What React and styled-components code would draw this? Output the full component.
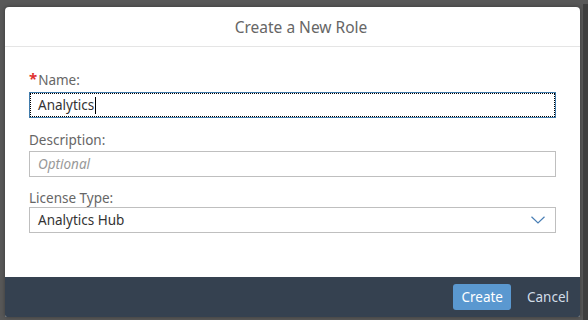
import React from "react";
import styled, { createGlobalStyle } from "styled-components";

const Global = createGlobalStyle`
  html, body { margin: 0; padding: 0; }
  body {
    width: 588px;
    height: 320px;
    overflow: hidden;
    background: #585858;
    font-family: "Noto Sans", "Liberation Sans", sans-serif;
  }
`;

const Screen = styled.div`
  display: flex;
  width: 588px;
  height: 320px;
`;

const Stage = styled.div`
  flex: 1;
  padding: 7px 0 0 5px;
`;

const SideStrip = styled.div`
  width: 5px;
  margin-top: 4px;
  background: #3e3e3e;
`;

const Dialog = styled.div`
  width: 575px;
  height: 310px;
  display: flex;
  flex-direction: column;
  background: #fff;
  border-radius: 4px 4px 2px 2px;
  overflow: hidden;
  box-shadow: 0 0 4px rgba(0, 0, 0, 0.35);
`;

const Header = styled.div`
  height: 39px;
  flex: none;
  display: flex;
  align-items: center;
  justify-content: center;
  padding-left: 17px;
  border-bottom: 1px solid #e5e5e5;
`;

const Title = styled.h1`
  margin: 0;
  font-size: 15.5px;
  font-weight: 400;
  color: #666;
`;

const Body = styled.div`
  flex: 1;
  padding: 24px 24px 0 24px;
  display: flex;
  flex-direction: column;
`;

const Field = styled.div`
  display: flex;
  flex-direction: column;
  margin-top: ${(p) => p.$top || 0}px;
`;

const Label = styled.label`
  font-size: 13.5px;
  line-height: 18px;
  color: #666;
  margin-bottom: ${(p) => p.$gap || 0}px;
  display: flex;
  align-items: flex-start;
`;

const Required = styled.span`
  color: #e03030;
  font-weight: 700;
  font-size: 15px;
  line-height: 14px;
  margin-right: 1px;
`;

const Box = styled.div`
  box-sizing: border-box;
  height: 26px;
  border: 1px solid ${(p) => (p.$focused ? "#427cac" : "#bfbfbf")};
  outline: ${(p) => (p.$focused ? "1px dotted #000" : "none")};
  outline-offset: -2px;
  display: flex;
  align-items: center;
  padding: 0 8px;
  font-size: 13.5px;
  color: #333;
  background: #fff;
`;

const Placeholder = styled.span`
  font-style: italic;
  color: #999;
  font-size: 13.5px;
`;

const Caret = styled.span`
  display: inline-block;
  width: 1px;
  height: 17px;
  background: #000;
  margin-left: 1px;
`;

const Value = styled.span`
  flex: 1;
  display: flex;
  align-items: center;
`;

const Chevron = styled.svg`
  width: 14px;
  height: 8px;
  margin-right: 2px;
`;

const Footer = styled.div`
  height: 40px;
  flex: none;
  background: #354150;
  display: flex;
  align-items: center;
  justify-content: flex-end;
  gap: 8px;
  padding-right: 3px;
`;

const Button = styled.button`
  height: 26px;
  padding: 0 8px;
  border: none;
  border-radius: 3px;
  font-family: inherit;
  font-size: 13.5px;
  background: ${(p) => (p.$primary ? "#5a98d0" : "transparent")};
  color: ${(p) => (p.$primary ? "#fff" : "#d2dde8")};
  cursor: pointer;
`;

export default function App() {
  return (
    <>
      <Global />
      <Screen>
        <Stage>
          <Dialog role="dialog" aria-label="Create a New Role">
            <Header>
              <Title>Create a New Role</Title>
            </Header>
            <Body>
              <Field>
                <Label $gap={3}>
                  <Required>*</Required>Name:
                </Label>
                <Box $focused>
                  <Value>
                    Analytics
                    <Caret />
                  </Value>
                </Box>
              </Field>
              <Field $top={13}>
                <Label $gap={2}>Description:</Label>
                <Box>
                  <Placeholder>Optional</Placeholder>
                </Box>
              </Field>
              <Field $top={12}>
                <Label $gap={0}>License Type:</Label>
                <Box>
                  <Value>Analytics Hub</Value>
                  <Chevron viewBox="0 0 14 8">
                    <path d="M0.5 0.8 L7 7 L13.5 0.8" fill="none" stroke="#4a7fb5" strokeWidth="1.2" />
                  </Chevron>
                </Box>
              </Field>
            </Body>
            <Footer>
              <Button $primary>Create</Button>
              <Button>Cancel</Button>
            </Footer>
          </Dialog>
        </Stage>
        <SideStrip />
      </Screen>
    </>
  );
}
